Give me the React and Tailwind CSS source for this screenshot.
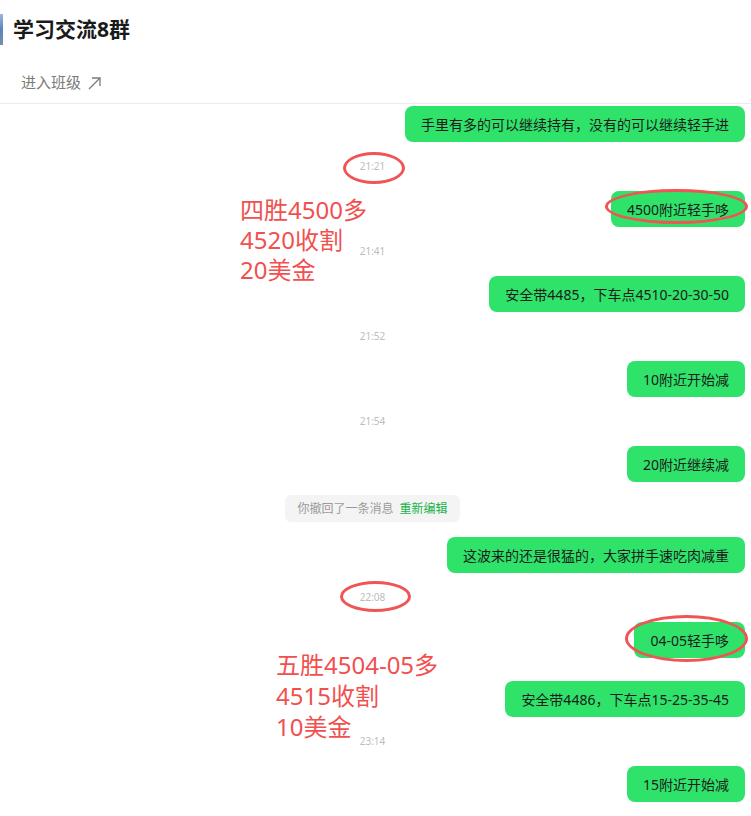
const items = [
  { type: 'msg', text: '手里有多的可以继续持有，没有的可以继续轻手进' },
  { type: 'time', text: '21:21' },
  { type: 'msg', text: '4500附近轻手哆' },
  { type: 'time', text: '21:41' },
  { type: 'msg', text: '安全带4485，下车点4510-20-30-50' },
  { type: 'time', text: '21:52' },
  { type: 'msg', text: '10附近开始减' },
  { type: 'time', text: '21:54' },
  { type: 'msg', text: '20附近继续减' },
  { type: 'recall' },
  { type: 'msg', text: '这波来的还是很猛的，大家拼手速吃肉减重' },
  { type: 'time', text: '22:08' },
  { type: 'msg', text: '04-05轻手哆' },
  { type: 'gap' },
  { type: 'msg', text: '安全带4486，下车点15-25-35-45' },
  { type: 'time', text: '23:14' },
  { type: 'msg', text: '15附近开始减' },
];

export default function App() {
  return (
    <div
      className="relative w-[751px] h-[816px] overflow-hidden bg-white"
      style={{ fontFamily: '"Noto Sans", "Noto Sans CJK SC", sans-serif' }}
    >
      {/* Header */}
      <div className="border-b border-[#ebebeb]">
        <div className="h-[58px] flex items-center gap-[10px]">
          <div className="w-[3px] h-[31px] bg-gradient-to-b from-[#9bb8de] via-[#5d83bb] to-[#7a8fa8]" />
          <h1 className="text-[21px] font-bold text-[#1a1a1a] leading-none">学习交流8群</h1>
        </div>
        <div className="h-[45px] pt-[4px] pl-[21px] flex items-center gap-[7px] text-[15px] text-[#7a7a7a]">
          <span>进入班级</span>
          <svg width="13" height="13" viewBox="0 0 13 13" fill="none" stroke="#7a7a7a" strokeWidth="1.3" className="mt-[1px]">
            <path d="M1 12 L12 1" />
            <path d="M4 1 H12 V9" />
          </svg>
        </div>
      </div>

      {/* Messages */}
      <div className="flex flex-col pt-[2px] pr-[6px]">
        {items.map((it, i) => {
          if (it.type === 'msg') {
            return (
              <div key={i} className="flex justify-end">
                <div className="h-9 px-4 flex items-center rounded-lg bg-[#2ee26a] text-[14px] text-[#1c1c1c] whitespace-nowrap">
                  {it.text}
                </div>
              </div>
            );
          }
          if (it.type === 'time') {
            return (
              <div key={i} className="h-[49px] flex items-center justify-center text-[10px] text-[#bcbcbc]">
                {it.text}
              </div>
            );
          }
          if (it.type === 'recall') {
            return (
              <div key={i} className="pt-[13px] pb-[15px] flex justify-center">
                <div className="h-[27px] px-3 flex items-center rounded-md bg-[#f4f4f4] text-[12px] text-[#9a9a9a]">
                  你撤回了一条消息<span className="ml-[6px] text-[#16b34a]">重新编辑</span>
                </div>
              </div>
            );
          }
          return <div key={i} className="h-[23px]" />;
        })}
      </div>

      {/* Annotations drawn over the screenshot */}
      <div className="absolute left-[343px] top-[152px] w-[62px] h-[32px] rounded-[50%] border-[3px] border-[#f05454]" />
      <div className="absolute left-[605px] top-[189px] w-[143px] h-[35px] rounded-[50%] border-[3px] border-[#f05454]" />
      <div className="absolute left-[340px] top-[581px] w-[71px] h-[31px] rounded-[50%] border-[3px] border-[#f05454]" />
      <div className="absolute left-[625px] top-[615px] w-[123px] h-[47px] rounded-[50%] border-[3px] border-[#f05454]" />

      <div className="absolute left-[240px] top-[195px] text-[24px] leading-[30px] text-[#f24f4f]">
        <div>四胜4500多</div>
        <div>4520收割</div>
        <div>20美金</div>
      </div>
      <div className="absolute left-[276px] top-[649px] text-[24px] leading-[31px] text-[#f24f4f]">
        <div>五胜4504-05多</div>
        <div>4515收割</div>
        <div>10美金</div>
      </div>
    </div>
  );
}
